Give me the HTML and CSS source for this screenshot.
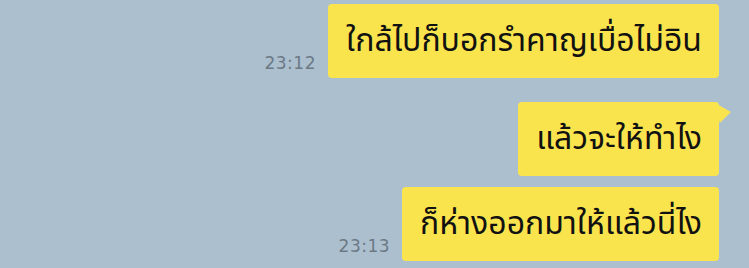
FILE: index.html
```html
<!DOCTYPE html>
<html lang="th">
<head>
	<meta charset="UTF-8">
	<title>chat</title>
<link rel="stylesheet" href="styles.css">
</head>
<body>
	<div class="chat">
		<div class="row first">
			<span class="time">23:12</span>
			<div class="bubble">ใกล้ไปก็บอกรำคาญเบื่อไม่อิน</div>
		</div>
		<div class="row second">
			<div class="bubble tail">แล้วจะให้ทำไง</div>
		</div>
		<div class="row third">
			<span class="time">23:13</span>
			<div class="bubble">ก็ห่างออกมาให้แล้วนี่ไง</div>
		</div>
	</div>
</body>
</html>
```
FILE: styles.css
```css
*{
	box-sizing: border-box;
}
body{
	margin: 0;
	background: #abbfcf;
	font-family: "Noto Sans Thai", "Noto Sans", "DejaVu Sans", sans-serif;
}
.chat{
	width: 749px;
	height: 268px;
	padding: 4px 30px 0 0;
	display: flex;
	flex-direction: column;
	align-items: flex-end;
}
.row{
	display: flex;
	align-items: flex-end;
	gap: 12px;
}
.second{
	margin-top: 24px;
}
.third{
	margin-top: 11px;
}
.time{
	font-family: "DejaVu Sans", sans-serif;
	font-size: 17px;
	letter-spacing: 0.5px;
	color: #6c7985;
	margin-bottom: 5px;
}
.bubble{
	position: relative;
	height: 74px;
	padding: 0 17px 0 18px;
	display: flex;
	align-items: center;
	background: #fae44e;
	border-radius: 4px;
	font-size: 32px;
	color: #111;
}
.tail::after{
	content: '';
	position: absolute;
	right: -12px;
	top: 1px;
	width: 16px;
	height: 20px;
	background: #fae44e;
	clip-path: polygon(0 0, 100% 45%, 30% 100%);
}
```
